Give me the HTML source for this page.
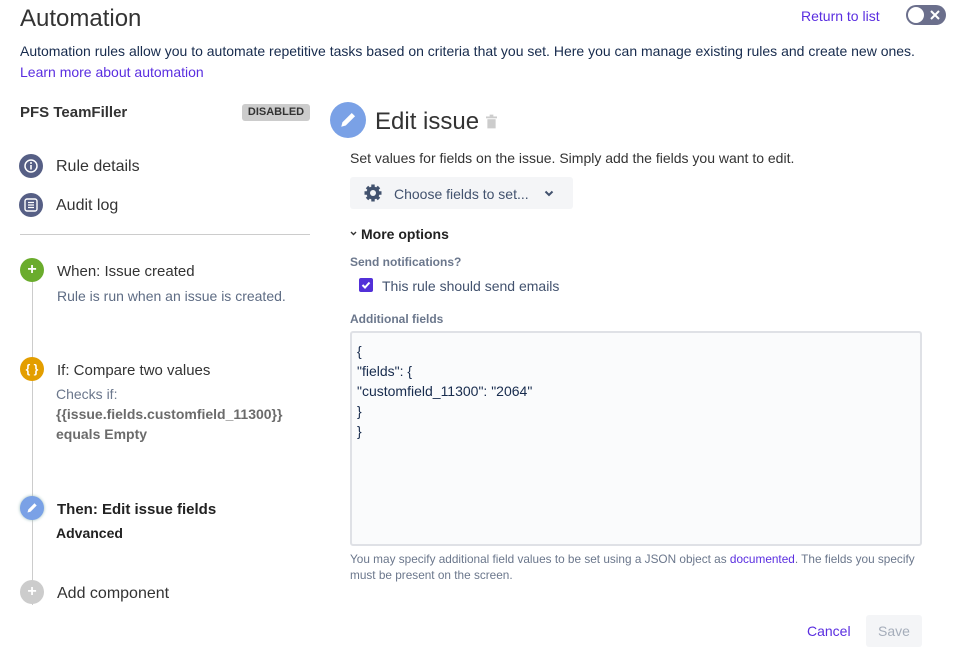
<!DOCTYPE html>
<html><head><meta charset="utf-8"><style>
*{box-sizing:border-box;margin:0;padding:0}
body{width:970px;height:642px;overflow:hidden;background:#fff;font-family:"Liberation Sans",sans-serif;color:#172b4d;position:relative}
.a{position:absolute;white-space:nowrap}
.ic{position:absolute;width:24px;height:24px;border-radius:50%;display:flex;align-items:center;justify-content:center;color:#fff}
</style></head><body>
<div class="a" style="left:20px;top:5px;font-size:24px;color:#333">Automation</div>
<div class="a" style="left:801px;top:8px;font-size:14px;color:#5a2ee0">Return to list</div>
<div class="a" style="left:906px;top:5px;width:40px;height:20px;border-radius:10px;background:#6b6f8c">
 <div style="position:absolute;left:2px;top:2px;width:16px;height:16px;border-radius:50%;background:#fff"></div>
 <svg style="position:absolute;left:23px;top:4px" width="12" height="12" viewBox="0 0 12 12"><path d="M2 2L10 10M10 2L2 10" stroke="#fff" stroke-width="2"/></svg>
</div>
<div class="a" style="left:20px;top:43px;font-size:14px;color:#172b4d">Automation rules allow you to automate repetitive tasks based on criteria that you set. Here you can manage existing rules and create new ones.</div>
<div class="a" style="left:20px;top:64px;font-size:14px;color:#5a2ee0">Learn more about automation</div>

<div class="a" style="left:20px;top:104px;font-size:15px;font-weight:bold;color:#333">PFS TeamFiller</div>
<div class="a" style="left:242px;top:104px;width:68px;height:17px;background:#ccc;border-radius:3px;font-size:11px;font-weight:bold;color:#333;text-align:center;line-height:17px">DISABLED</div>

<div class="ic" style="left:19px;top:154px;background:#565f85"><svg width="14" height="14" viewBox="0 0 14 14"><circle cx="7" cy="7" r="6" fill="none" stroke="#fff" stroke-width="1.5"/><rect x="6.2" y="6" width="1.6" height="4.5" fill="#fff"/><circle cx="7" cy="4" r="1" fill="#fff"/></svg></div>
<div class="a" style="left:56px;top:158px;font-size:16px;color:#333">Rule details</div>
<div class="ic" style="left:19px;top:193px;background:#565f85"><svg width="14" height="14" viewBox="0 0 14 14"><rect x="1" y="1" width="12" height="12" rx="2" fill="none" stroke="#fff" stroke-width="1.4"/><path d="M4 4.5h6M4 7h6M4 9.5h6" stroke="#fff" stroke-width="1.2"/></svg></div>
<div class="a" style="left:56px;top:197px;font-size:16px;color:#333">Audit log</div>
<div class="a" style="left:20px;top:234px;width:290px;height:1px;background:#ccc"></div>

<div class="a" style="left:32px;top:260px;width:1px;height:345px;background:#ccc"></div>
<div class="ic" style="left:20px;top:258px;background:#6aac2c;font-weight:bold;font-size:16px">+</div>
<div class="a" style="left:57px;top:263px;font-size:15px;color:#333">When: Issue created</div>
<div class="a" style="left:57px;top:288px;font-size:14px;color:#5e6c84">Rule is run when an issue is created.</div>

<div class="ic" style="left:20px;top:357px;background:#e39e00;font-weight:bold;font-size:12px">{ }</div>
<div class="a" style="left:57px;top:362px;font-size:15px;color:#333">If: Compare two values</div>
<div class="a" style="left:56px;top:386px;font-size:14px;color:#6b778c">Checks if:</div>
<div class="a" style="left:56px;top:406px;font-size:14px;font-weight:bold;color:#6b6b6b">{{issue.fields.customfield_11300}}</div>
<div class="a" style="left:56px;top:426px;font-size:14px;font-weight:bold;color:#6b6b6b">equals Empty</div>

<div class="ic" style="left:20px;top:496px;background:#7aa1e6;box-shadow:0 0 3px #9bb"><svg width="12" height="12" viewBox="0 0 12 12"><path d="M1.5 10.5L2.3 7.5L8.5 1.3L10.7 3.5L4.5 9.7Z" fill="#fff"/></svg></div>
<div class="a" style="left:57px;top:501px;font-size:15px;font-weight:bold;color:#222">Then: Edit issue fields</div>
<div class="a" style="left:56px;top:525px;font-size:14px;font-weight:bold;color:#222">Advanced</div>

<div class="ic" style="left:20px;top:580px;background:#ccc;font-weight:bold;font-size:16px">+</div>
<div class="a" style="left:57px;top:585px;font-size:16px;color:#333">Add component</div>

<div class="ic" style="left:330px;top:102px;width:36px;height:36px;background:#7aa1e6"><svg width="18" height="18" viewBox="0 0 12 12"><path d="M1.5 10.5L2.3 7.5L8.5 1.3L10.7 3.5L4.5 9.7Z" fill="#fff"/></svg></div>
<div class="a" style="left:375px;top:108px;font-size:24px;color:#333">Edit issue</div>
<svg class="a" style="left:486px;top:114px" width="11" height="15" viewBox="0 0 12 15"><rect x="0" y="2" width="12" height="2" fill="#ccc"/><rect x="4" y="0" width="4" height="2" fill="#ccc"/><rect x="1.5" y="5" width="9" height="10" fill="#ccc"/></svg>
<div class="a" style="left:350px;top:150px;font-size:14px;color:#333">Set values for fields on the issue. Simply add the fields you want to edit.</div>
<div class="a" style="left:350px;top:177px;width:223px;height:32px;background:#f4f5f7;border-radius:3px"></div>
<svg class="a" style="left:363px;top:183px" width="20" height="20" viewBox="0 0 20 20"><g fill="#42526e"><circle cx="10" cy="10" r="6.5"/><g stroke="#42526e" stroke-width="3.4"><path d="M10 1.5v17M1.5 10h17M4 4l12 12M16 4L4 16"/></g></g><circle cx="10" cy="10" r="3" fill="#f4f5f7"/></svg>
<div class="a" style="left:394px;top:186px;font-size:14px;color:#42526e">Choose fields to set...</div>
<svg class="a" style="left:544px;top:190px" width="10" height="7" viewBox="0 0 10 7"><path d="M1.5 1.5L5 5L8.5 1.5" stroke="#42526e" stroke-width="2" fill="none"/></svg>
<svg class="a" style="left:350px;top:231px" width="7" height="5" viewBox="0 0 7 5"><path d="M1 1L3.5 3.5L6 1" stroke="#333" stroke-width="1.4" fill="none"/></svg>
<div class="a" style="left:361px;top:226px;font-size:14px;font-weight:bold;color:#222">More options</div>
<div class="a" style="left:350px;top:255px;font-size:12px;font-weight:bold;color:#6b778c">Send notifications?</div>
<div class="a" style="left:359px;top:278px;width:14px;height:14px;border-radius:2px;background:#5230d8"><svg width="14" height="14" viewBox="0 0 14 14"><path d="M3.5 7L6 9.5L10.5 4.5" stroke="#fff" stroke-width="2" fill="none"/></svg></div>
<div class="a" style="left:382px;top:278px;font-size:14px;color:#42526e">This rule should send emails</div>
<div class="a" style="left:350px;top:312px;font-size:12px;font-weight:bold;color:#6b778c">Additional fields</div>
<div class="a" style="left:350px;top:331px;width:572px;height:215px;background:#fafbfc;border:2px solid #dfe1e6;border-radius:3px"></div>
<div class="a" style="left:357px;top:341px;font-size:14px;line-height:20px;color:#172b4d;white-space:pre">{
"fields": {
"customfield_11300": "2064"
}
}</div>
<div class="a" style="left:350px;top:551px;font-size:11.8px;line-height:16px;color:#6b778c">You may specify additional field values to be set using a JSON object as <span style="color:#5a2ee0">documented</span>. The fields you specify<br>must be present on the screen.</div>
<div class="a" style="left:807px;top:623px;font-size:14px;color:#5a2ee0">Cancel</div>
<div class="a" style="left:866px;top:615px;width:56px;height:32px;background:#f4f5f7;border-radius:3px;font-size:14px;color:#a5adba;text-align:center;line-height:32px">Save</div>
</body></html>
